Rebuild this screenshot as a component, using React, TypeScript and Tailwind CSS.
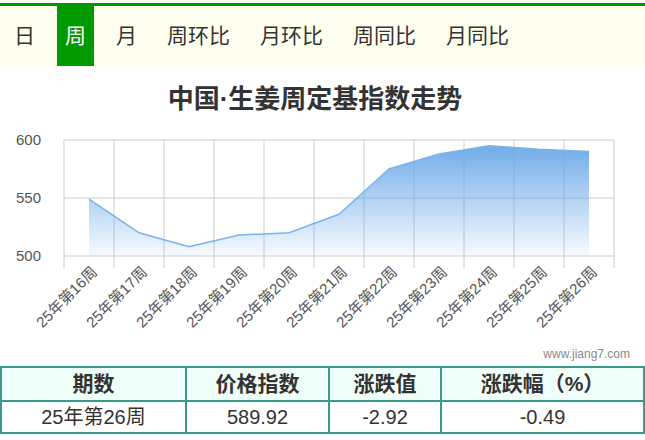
const tabs = ["日", "周", "月", "周环比", "月环比", "周同比", "月同比"];
const vals = [549, 520, 508, 518, 520, 536, 575, 588, 595, 592, 590];

export default function App() {
  const font = { fontFamily: '"Liberation Sans", "Noto Sans CJK SC", sans-serif' };
  const y = (v: number) => 256 - (v - 500) * 1.16;
  const pts = vals.map((v, i) => `${89 + i * 50},${y(v)}`);
  const line = "M" + pts.join(" L");
  const area = line + ` L589,256 L89,256 Z`;
  return (
    <div className="w-[645px] h-[440px] bg-white overflow-hidden" style={font}>
      <div className="h-[3px] bg-white" />
      <div className="h-[3px] bg-[#009900]" />
      <div className="flex h-[60px] bg-[#fffff0] pl-[6px] gap-[14px] items-stretch">
        {tabs.map((t) => (
          <div
            key={t}
            className={`flex items-center justify-center text-[21px] px-[8px] ${
              t === "周" ? "bg-[#009900] text-white" : "text-[#333]"
            }`}
          >
            {t}
          </div>
        ))}
      </div>
      <svg width="645" height="300" viewBox="0 66 645 300" className="block">
        <defs>
          <linearGradient id="g" x1="0" y1="0" x2="0" y2="1">
            <stop offset="0" stopColor="#6aa8e8" stopOpacity="0.95" />
            <stop offset="1" stopColor="#6aa8e8" stopOpacity="0.05" />
          </linearGradient>
        </defs>
        <text x="315" y="108" textAnchor="middle" fontSize="26" fontWeight="bold" fill="#333">
          中国·生姜周定基指数走势
        </text>
        {[600, 550, 500].map((v) => (
          <g key={v}>
            <line x1="64" x2="614" y1={y(v)} y2={y(v)} stroke="#ccc" />
            <text x="41" y={y(v) + 5} textAnchor="end" fontSize="15" fill="#555">
              {v}
            </text>
          </g>
        ))}
        {Array.from({ length: 12 }).map((_, i) => (
          <line key={i} x1={64 + i * 50} x2={64 + i * 50} y1="140" y2="268" stroke="#ccc" />
        ))}
        <path d={area} fill="url(#g)" />
        <path d={line} fill="none" stroke="#7ab4ea" strokeWidth="1.5" />
        {vals.map((_, i) => (
          <text
            key={i}
            transform={`translate(${98 + i * 50},273) rotate(-45)`}
            textAnchor="end"
            fontSize="15"
            fill="#555"
          >
            {`25年第${16 + i}周`}
          </text>
        ))}
        <text x="630" y="358" textAnchor="end" fontSize="12" fill="#888">
          www.jiang7.com
        </text>
      </svg>
      <table className="w-[645px] border-collapse border-2 border-[#3a9a8a] text-[20px] text-center text-[#333]">
        <thead>
          <tr className="bg-[#effef8] h-[34px] text-[21px]">
            <th className="border-2 border-[#3a9a8a] w-[185px] font-bold">期数</th>
            <th className="border-2 border-[#3a9a8a] w-[143px] font-bold">价格指数</th>
            <th className="border-2 border-[#3a9a8a] w-[112px] font-bold">涨跌值</th>
            <th className="border-2 border-[#3a9a8a] font-bold">涨跌幅（%）</th>
          </tr>
        </thead>
        <tbody>
          <tr className="h-[32px]">
            <td className="border-2 border-[#3a9a8a]">25年第26周</td>
            <td className="border-2 border-[#3a9a8a]">589.92</td>
            <td className="border-2 border-[#3a9a8a]">-2.92</td>
            <td className="border-2 border-[#3a9a8a]">-0.49</td>
          </tr>
        </tbody>
      </table>
    </div>
  );
}
